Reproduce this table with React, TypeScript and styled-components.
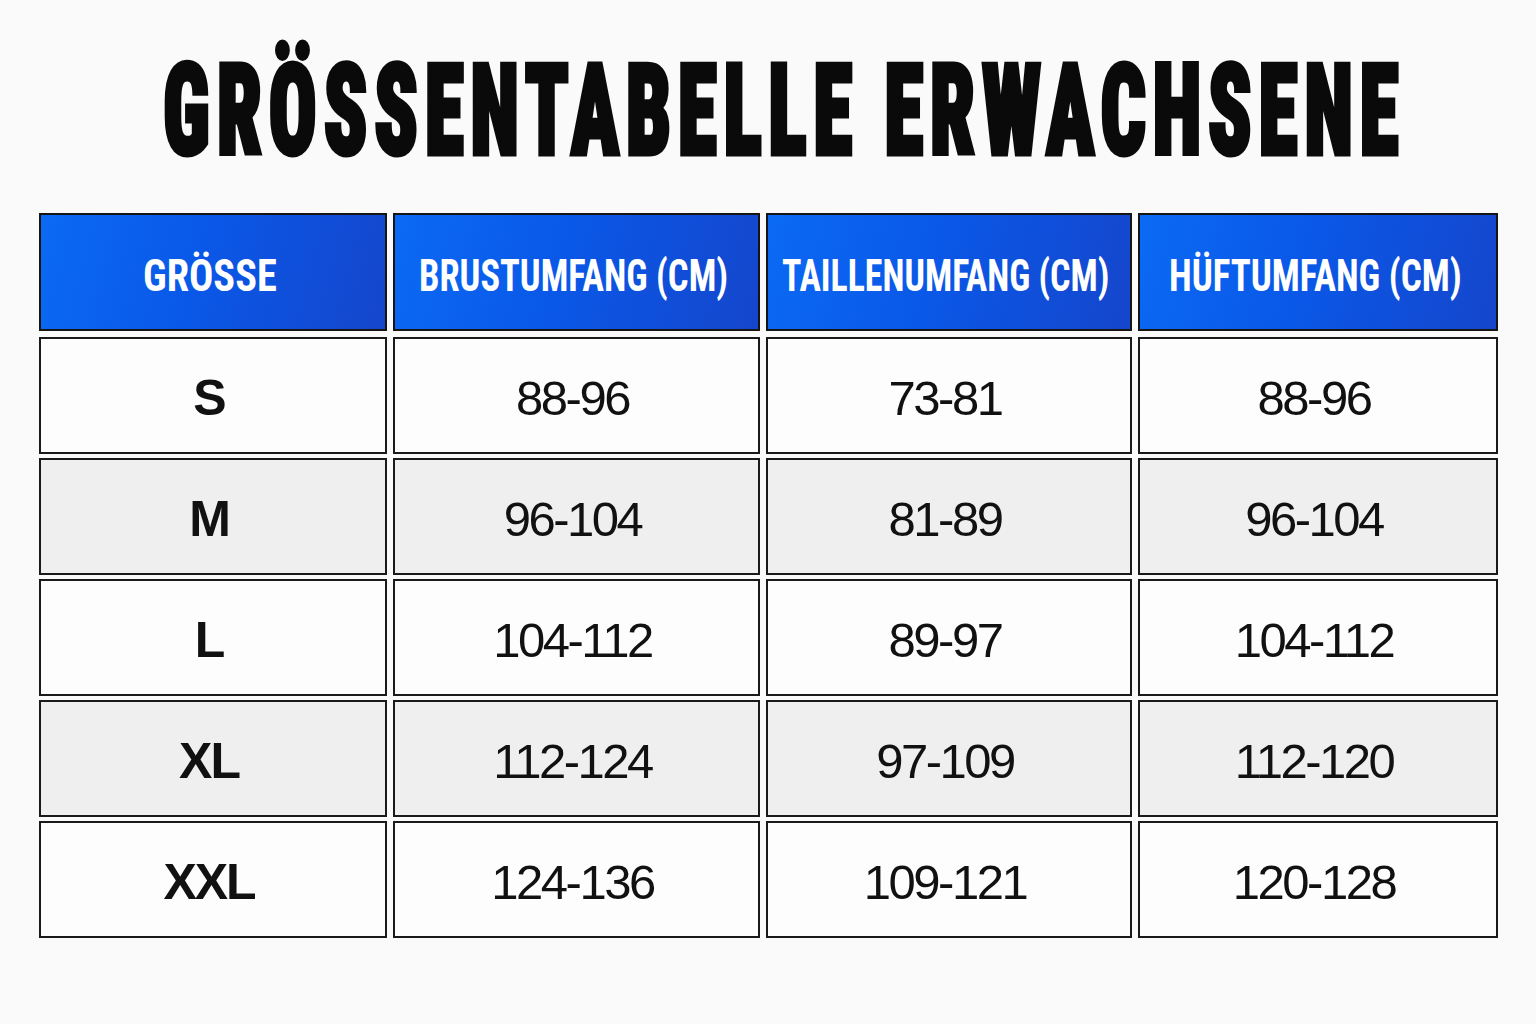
import React, { useLayoutEffect, useRef, useState } from "react";
import styled, { createGlobalStyle } from "styled-components";

const Global = createGlobalStyle`
  html, body { margin: 0; padding: 0; background: #fafafa; }
  #root { width: 1536px; height: 1024px; }
`;

const Page = styled.div`
  width: 1536px;
  height: 1024px;
  box-sizing: border-box;
  padding: 0 38px 0 39px;
  display: flex;
  flex-direction: column;
  background: #fafafa;
`;

const TitleBar = styled.h1`
  margin: 0;
  height: 213px;
  display: flex;
  justify-content: center;
  align-items: flex-start;
  padding: 48px 0 0 32px;
  box-sizing: border-box;
  font-family: "Roboto Condensed", "DejaVu Sans Condensed", "DejaVu Sans", sans-serif;
  font-weight: 900;
  font-size: 126px;
  line-height: 1;
  letter-spacing: 11px;
  color: #0a0a0a;
  -webkit-text-stroke: 5px #0a0a0a;
`;

const Squeeze = styled.span`
  display: inline-block;
  white-space: nowrap;
  transform-origin: center center;
`;

const Grid = styled.div`
  display: grid;
  grid-template-columns: 348px 367px 366px 360px;
  grid-template-rows: 120px repeat(5, 117px);
  column-gap: 6px;
  row-gap: 4px;
`;

const HeadCell = styled.div`
  box-sizing: border-box;
  border: 2px solid #151515;
  margin-bottom: 2px;
  background: linear-gradient(105deg, #0b6af4 0%, #0a58e8 45%, #1546cc 100%);
  display: flex;
  align-items: center;
  justify-content: center;
  padding: 8px 6px 0 0;
  color: #ffffff;
  font-family: "Roboto Condensed", "DejaVu Sans Condensed", "DejaVu Sans", sans-serif;
  font-weight: 700;
  font-size: 44px;
`;

const BodyCell = styled.div<{ $alt: boolean }>`
  box-sizing: border-box;
  border: 2px solid #1a1a1a;
  background: ${(p) => (p.$alt ? "#efefef" : "#fdfdfd")};
  display: flex;
  align-items: center;
  justify-content: center;
  padding: 4px 8px 0 0;
  color: #111;
  font-family: "Liberation Sans", Arial, sans-serif;
`;

const SizeLabel = styled.span`
  font-weight: 700;
  font-size: 50px;
  letter-spacing: -2px;
`;

const Value = styled.span`
  font-weight: 400;
  font-size: 49px;
  letter-spacing: -2.5px;
`;

function Fit({ width, children }: { width: number; children: React.ReactNode }) {
  const ref = useRef<HTMLSpanElement>(null);
  const [scale, setScale] = useState(1);
  useLayoutEffect(() => {
    const measure = () => {
      const el = ref.current;
      if (el && el.offsetWidth) setScale(width / el.offsetWidth);
    };
    measure();
    if ((document as any).fonts?.ready) (document as any).fonts.ready.then(measure);
  }, [width]);
  return (
    <Squeeze ref={ref} style={{ transform: `scaleX(${scale})` }}>
      {children}
    </Squeeze>
  );
}

const headers = [
  { label: "GRÖSSE", w: 134 },
  { label: "BRUSTUMFANG (CM)", w: 309 },
  { label: "TAILLENUMFANG (CM)", w: 327 },
  { label: "HÜFTUMFANG (CM)", w: 293 },
];

const rows = [
  ["S", "88-96", "73-81", "88-96"],
  ["M", "96-104", "81-89", "96-104"],
  ["L", "104-112", "89-97", "104-112"],
  ["XL", "112-124", "97-109", "112-120"],
  ["XXL", "124-136", "109-121", "120-128"],
];

export default function App() {
  return (
    <>
      <Global />
      <Page>
        <TitleBar>
          <Fit width={1242}>GRÖSSENTABELLE ERWACHSENE</Fit>
        </TitleBar>
        <Grid>
          {headers.map((h) => (
            <HeadCell key={h.label}>
              <Fit width={h.w}>{h.label}</Fit>
            </HeadCell>
          ))}
          {rows.map((r, i) =>
            r.map((v, j) => (
              <BodyCell key={`${i}-${j}`} $alt={i % 2 === 1}>
                {j === 0 ? <SizeLabel>{v}</SizeLabel> : <Value>{v}</Value>}
              </BodyCell>
            ))
          )}
        </Grid>
      </Page>
    </>
  );
}
